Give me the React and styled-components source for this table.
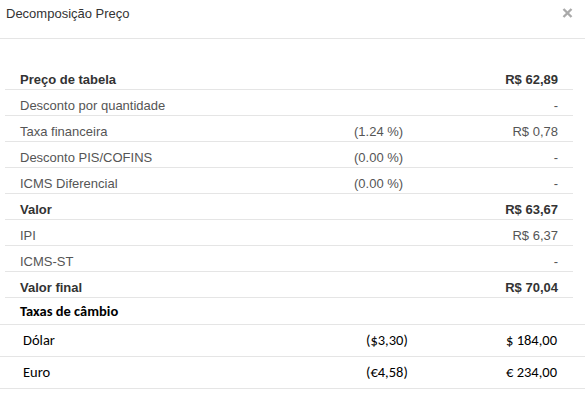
import styled, { createGlobalStyle } from 'styled-components'

const GlobalStyle = createGlobalStyle`
  body {
    margin: 0;
    background: #fff;
    font-family: 'Liberation Sans', Arial, sans-serif;
  }
`

const priceRows = [
  { label: 'Preço de tabela', rate: '', value: 'R$ 62,89', strong: true },
  { label: 'Desconto por quantidade', rate: '', value: '-' },
  { label: 'Taxa financeira', rate: '(1.24 %)', value: 'R$ 0,78' },
  { label: 'Desconto PIS/COFINS', rate: '(0.00 %)', value: '-' },
  { label: 'ICMS Diferencial', rate: '(0.00 %)', value: '-' },
  { label: 'Valor', rate: '', value: 'R$ 63,67', strong: true },
  { label: 'IPI', rate: '', value: 'R$ 6,37' },
  { label: 'ICMS-ST', rate: '', value: '-' },
  { label: 'Valor final', rate: '', value: 'R$ 70,04', strong: true }
]

const exchangeRows = [
  { label: 'Dólar', rate: '($3,30)', value: '$ 184,00' },
  { label: 'Euro', rate: '(€4,58)', value: '€ 234,00' }
]

const Modal = styled.div`
  width: 585px;
  height: 401px;
  background: #fff;
  overflow: hidden;
`

const Header = styled.div`
  display: flex;
  align-items: flex-start;
  justify-content: space-between;
  height: 39px;
  box-sizing: border-box;
  padding: 5px 12px 0 6px;
  border-bottom: 1px solid #e5e5e5;
`

const Title = styled.h4`
  margin: 0;
  font-size: 13px;
  line-height: 18px;
  font-weight: 400;
  color: #333;
`

const Close = styled.button`
  display: flex;
  margin-top: 3px;
  padding: 0;
  border: 0;
  background: none;
  color: #aaa;
`

const Body = styled.div`
  padding-top: 25px;
`

const PriceTable = styled.div`
  margin: 0 12px 0 5px;
`

const PriceRow = styled.div`
  display: grid;
  grid-template-columns: 1fr 120px 84px;
  height: 26px;
  box-sizing: border-box;
  padding: 6px 15px 0;
  border-bottom: 1px solid #e5e5e5;
  font-size: 13px;
  line-height: 19px;
  font-weight: ${({ $strong }) => ($strong ? 700 : 400)};
  color: ${({ $strong }) => ($strong ? '#333' : '#555')};
`

const Value = styled.span`
  text-align: right;
`

const ExchangeTable = styled.div`
  font-family: Carlito, Lato, 'Liberation Sans', sans-serif;
  color: #000;
`

const ExchangeHead = styled.div`
  height: 27px;
  box-sizing: border-box;
  padding: 4px 20px 0;
  border-bottom: 1px solid #e5e5e5;
  font-size: 14.5px;
  line-height: 19px;
  font-weight: 700;
`

const ExchangeRow = styled.div`
  display: grid;
  grid-template-columns: 343px 140px 1fr;
  height: 32px;
  box-sizing: border-box;
  padding: 6px 0 0 23px;
  border-bottom: 1px solid #e5e5e5;
  font-size: 14.5px;
  line-height: 19px;
`

export default function App() {
  return (
    <>
      <GlobalStyle />
      <Modal>
        <Header>
          <Title>Decomposição Preço</Title>
          <Close aria-label="Fechar">
            <svg width="11" height="10" viewBox="0 0 11 10">
              <path d="M1.5 1 L9.5 9 M9.5 1 L1.5 9" stroke="currentColor" strokeWidth="2.4" />
            </svg>
          </Close>
        </Header>
        <Body>
          <PriceTable>
            {priceRows.map(row => (
              <PriceRow key={row.label} $strong={row.strong}>
                <span>{row.label}</span>
                <span>{row.rate}</span>
                <Value>{row.value}</Value>
              </PriceRow>
            ))}
          </PriceTable>
          <ExchangeTable>
            <ExchangeHead>Taxas de câmbio</ExchangeHead>
            {exchangeRows.map(row => (
              <ExchangeRow key={row.label}>
                <span>{row.label}</span>
                <span>{row.rate}</span>
                <span>{row.value}</span>
              </ExchangeRow>
            ))}
          </ExchangeTable>
        </Body>
      </Modal>
    </>
  )
}
